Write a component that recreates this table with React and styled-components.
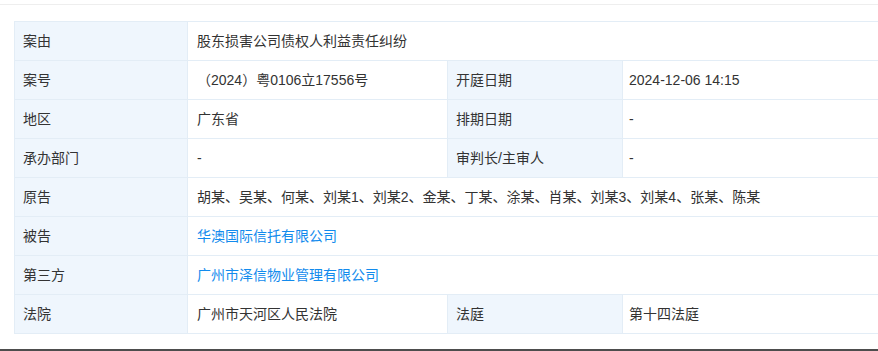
import styled, { createGlobalStyle } from "styled-components";

const GlobalStyle = createGlobalStyle`
  html, body {
    margin: 0;
    padding: 0;
    background: #fff;
    overflow: hidden;
  }
  body {
    font-family: "Liberation Sans", "Noto Sans CJK SC", sans-serif;
    color: #333;
  }
`;

const Page = styled.div`
  width: 878px;
  height: 351px;
  box-sizing: border-box;
  padding-top: 4px;
  border-bottom: 2px solid #4d4d4d;
  overflow: hidden;
`;

const Section = styled.div`
  border-top: 1px solid #eeeeee;
  padding: 16px 0 0 14px;
`;

const Table = styled.table`
  border-collapse: collapse;
  width: 880px;
  table-layout: fixed;
  font-size: 14px;
  line-height: 20px;
`;

const Label = styled.td`
  background: #eff6fd;
  border: 1px solid #e3edf6;
  height: 39px;
  padding: 0 0 0 8px;
  box-sizing: border-box;
  color: #333;
  vertical-align: middle;
`;

const Value = styled.td`
  border: 1px solid #e3edf6;
  height: 39px;
  padding: 0 0 0 ${(p) => (p.$tight ? "6px" : "9px")};
  box-sizing: border-box;
  color: #333;
  vertical-align: middle;
  white-space: nowrap;
`;

const LinkText = styled.a`
  color: #128bed;
  text-decoration: none;
  cursor: pointer;
`;

const rows = [
  { label: "案由", value: "股东损害公司债权人利益责任纠纷" },
  { label: "案号", value: "（2024）粤0106立17556号", label2: "开庭日期", value2: "2024-12-06 14:15" },
  { label: "地区", value: "广东省", label2: "排期日期", value2: "-" },
  { label: "承办部门", value: "-", label2: "审判长/主审人", value2: "-" },
  {
    label: "原告",
    value: "胡某、吴某、何某、刘某1、刘某2、金某、丁某、涂某、肖某、刘某3、刘某4、张某、陈某",
  },
  { label: "被告", value: "华澳国际信托有限公司", link: true },
  { label: "第三方", value: "广州市泽信物业管理有限公司", link: true },
  { label: "法院", value: "广州市天河区人民法院", label2: "法庭", value2: "第十四法庭" },
];

export default function App() {
  return (
    <Page>
      <GlobalStyle />
      <Section>
        <Table>
          <colgroup>
            <col style={{ width: 173 }} />
            <col style={{ width: 260 }} />
            <col style={{ width: 175 }} />
            <col />
          </colgroup>
          <tbody>
            {rows.map((r) => (
              <tr key={r.label}>
                <Label>{r.label}</Label>
                {r.label2 ? (
                  <>
                    <Value>{r.value}</Value>
                    <Label>{r.label2}</Label>
                    <Value $tight>{r.value2}</Value>
                  </>
                ) : (
                  <Value colSpan={3}>
                    {r.link ? <LinkText>{r.value}</LinkText> : r.value}
                  </Value>
                )}
              </tr>
            ))}
          </tbody>
        </Table>
      </Section>
    </Page>
  );
}
